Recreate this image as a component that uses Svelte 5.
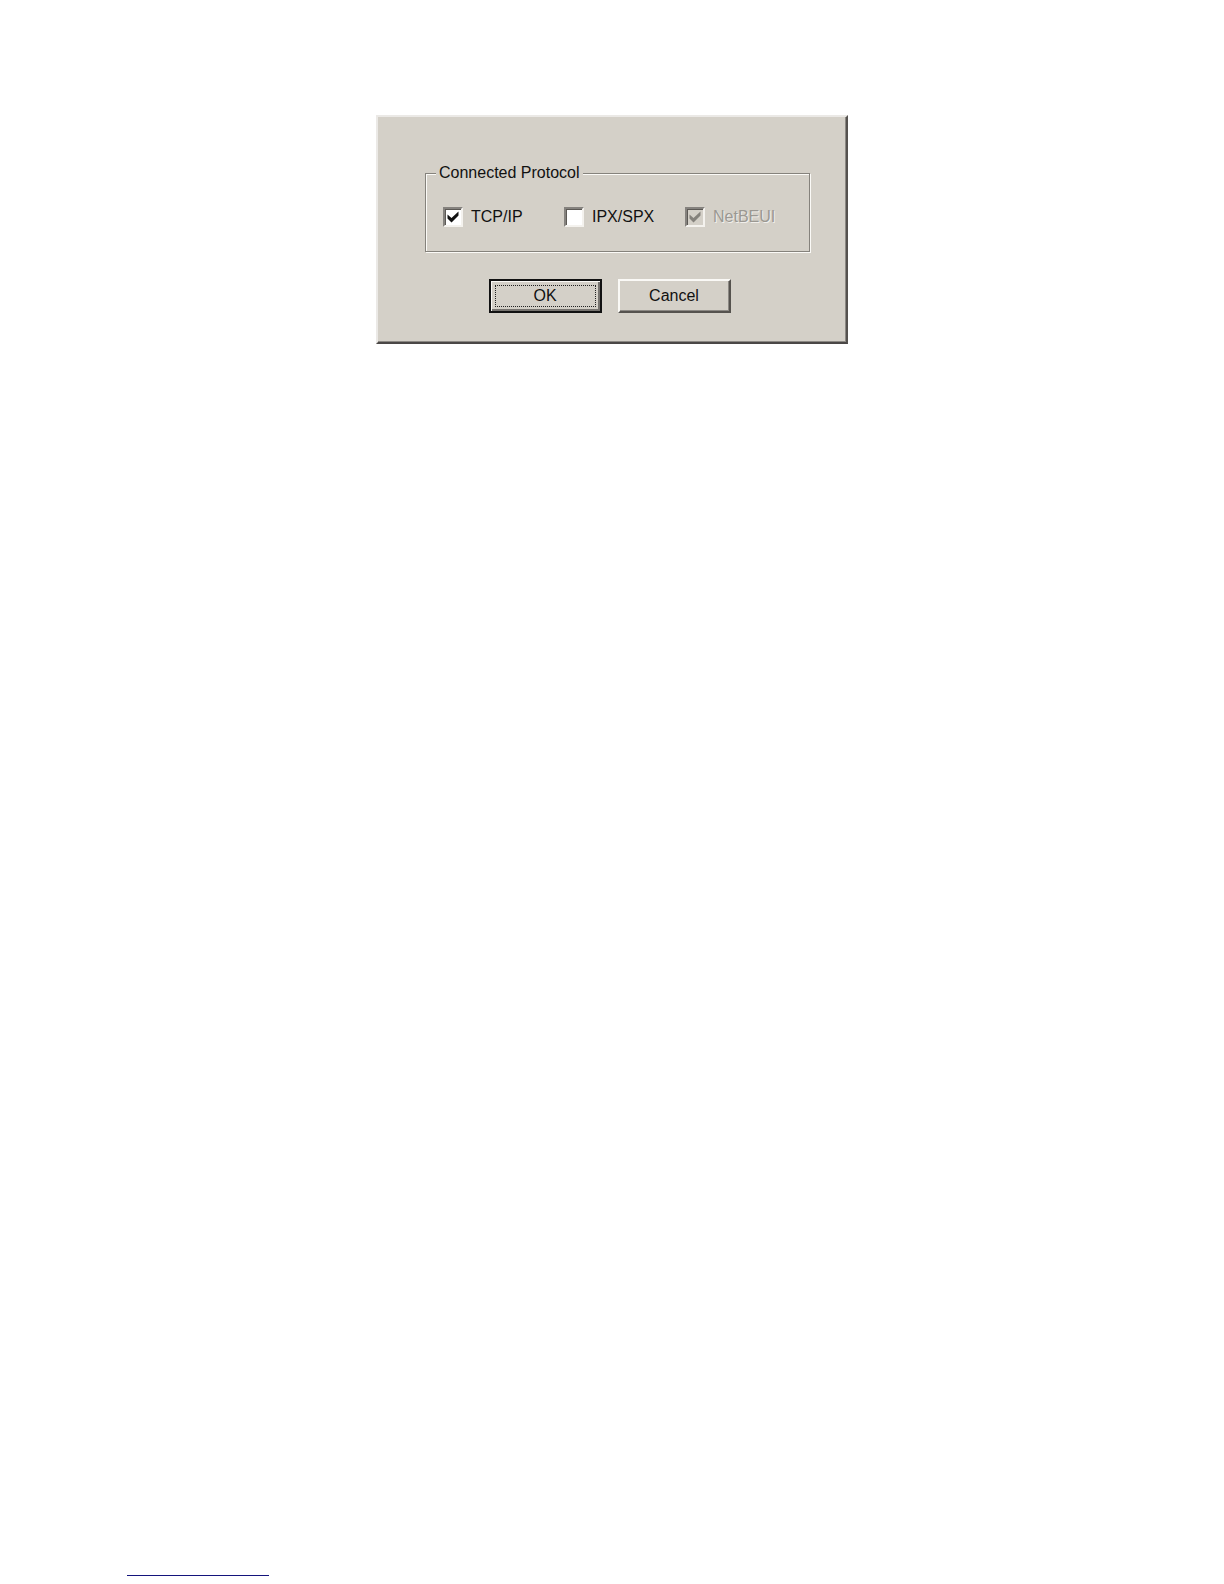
<script lang="ts">
  let protocols = $state([
    { id: 'tcpip', label: 'TCP/IP', checked: true, disabled: false },
    { id: 'ipxspx', label: 'IPX/SPX', checked: false, disabled: false },
    { id: 'netbeui', label: 'NetBEUI', checked: true, disabled: true }
  ]);
</script>

<main class="page">
  <form class="dialog" onsubmit={(e) => e.preventDefault()}>
    <fieldset class="group">
      <legend>Connected Protocol</legend>
      <div class="options">
        {#each protocols as protocol (protocol.id)}
          <label class="option" class:disabled={protocol.disabled} for={protocol.id}>
            <span class="box">
              <input
                type="checkbox"
                id={protocol.id}
                bind:checked={protocol.checked}
                disabled={protocol.disabled}
              />
              {#if protocol.checked}
                <svg class="tick" viewBox="0 0 12 12" aria-hidden="true">
                  <path d="M0.5 3.5 L4.5 7 L11.5 0.5 V4.5 L4.5 11.5 L0.5 7.5 Z" />
                </svg>
              {/if}
            </span>
            {protocol.label}
          </label>
        {/each}
      </div>
    </fieldset>
    <div class="actions">
      <button type="submit" class="btn default"><span class="focus">OK</span></button>
      <button type="button" class="btn"><span>Cancel</span></button>
    </div>
  </form>
  <hr class="rule" />
</main>

<style>
  :global(body) {
    background: #fff;
  }

  .page {
    display: flex;
    flex-direction: column;
    align-items: center;
    box-sizing: border-box;
    min-height: 100vh;
    padding: 115px 16px 8px;
    font-family: 'Liberation Sans', Arial, sans-serif;
    font-size: 16px;
    line-height: 20px;
    color: #111;
  }

  .dialog {
    box-sizing: border-box;
    width: 100%;
    max-width: 472px;
    padding: 46px 34px 29px 47px;
    background: #d4d0c8;
    border: 2px solid;
    border-color: #ebe9e6 #55524f #4a4746 #ebe9e6;
    box-shadow: inset -1px -1px 0 #8c8984;
  }

  .group {
    min-width: 0;
    margin: 0 2px 0 0;
    padding: 24px 7px 24px 17px;
    border: 1px solid #85827c;
    box-shadow: 1px 1px 0 #fbfaf7, inset 1px 1px 0 #fbfaf7;
  }

  legend {
    margin-left: -7px;
    padding: 0 3px;
    background: #d4d0c8;
  }

  .options {
    display: grid;
    grid-template-columns: repeat(3, 1fr);
    column-gap: 4px;
  }

  .option {
    display: flex;
    align-items: center;
    gap: 8px;
    white-space: nowrap;
  }

  .option.disabled {
    color: #9b9892;
    text-shadow: 1px 1px 0 #f1efeb;
  }

  .box {
    position: relative;
    flex: none;
    width: 20px;
    height: 20px;
  }

  input {
    appearance: none;
    display: block;
    box-sizing: border-box;
    width: 20px;
    height: 20px;
    margin: 0;
    background: #fff;
    border: 2px solid;
    border-color: #85827e #f4f2ee #f4f2ee #85827e;
    box-shadow: inset 1px 1px 0 #5c5955;
  }

  input:disabled {
    background: #d4d0c8;
  }

  .tick {
    position: absolute;
    top: 4px;
    left: 4px;
    width: 12px;
    height: 12px;
    fill: #111;
    pointer-events: none;
  }

  .disabled .tick {
    fill: #85827c;
  }

  .actions {
    display: flex;
    justify-content: center;
    gap: 16px;
    margin: 27px 18px 0 0;
  }

  .btn {
    display: flex;
    box-sizing: border-box;
    width: 113px;
    height: 34px;
    padding: 4px;
    font: inherit;
    color: inherit;
    background: #d4d0c8;
    border: 2px solid;
    border-color: #faf9f6 #55524e #55524e #faf9f6;
    border-radius: 0;
    box-shadow: inset -1px -1px 0 #8c8984;
  }

  .btn span {
    flex: 1;
    border: 1px solid transparent;
  }

  .btn.default {
    border: 2px solid #111;
    box-shadow: inset 1px 1px 0 #faf9f6, inset -2px -2px 0 #76736f;
  }

  .btn .focus {
    border: 1px dotted #222;
  }

  .rule {
    width: 142px;
    height: 1px;
    margin: auto auto 0 111px;
    background: #14147c;
    border: 0;
  }
</style>
